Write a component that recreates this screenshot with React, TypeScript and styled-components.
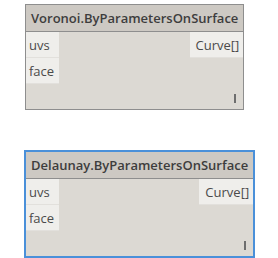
import React from "react";
import styled, { createGlobalStyle } from "styled-components";

const GlobalStyle = createGlobalStyle`
  body {
    margin: 0;
    background: #ffffff;
    font-family: "Open Sans", "Liberation Sans", sans-serif;
  }
`;

type NodeData = {
  title: string;
  inputs: string[];
  outputs: string[];
  selected?: boolean;
};

const nodes: NodeData[] = [
  { title: "Voronoi.ByParametersOnSurface", inputs: ["uvs", "face"], outputs: ["Curve[]"] },
  { title: "Delaunay.ByParametersOnSurface", inputs: ["uvs", "face"], outputs: ["Curve[]"], selected: true },
];

const Canvas = styled.div`
  display: flex;
  flex-direction: column;
  align-items: flex-start;
  gap: 40px;
  padding: 4px 0 0 24px;
`;

const Node = styled.div<{ $selected?: boolean }>`
  display: inline-flex;
  flex-direction: column;
  background: #dcd9d3;
  border: ${(p) => (p.$selected ? "2px solid #4a90d9" : "1px solid #8e8e8e")};
  margin-left: ${(p) => (p.$selected ? "0" : "1px")};
  box-sizing: border-box;
`;

const Header = styled.div`
  height: 27px;
  display: flex;
  align-items: center;
  padding: 0 5px;
  background: #cdc9c3;
  border-bottom: 1px solid #8e8e8e;
  box-sizing: border-box;
  color: #3d3d3d;
  font-size: 13px;
  font-weight: 600;
  white-space: nowrap;
`;

const Body = styled.div`
  display: flex;
  justify-content: space-between;
`;

const PortColumn = styled.div<{ $align: "left" | "right" }>`
  display: flex;
  flex-direction: column;
  align-items: ${(p) => (p.$align === "left" ? "stretch" : "flex-end")};
`;

const Port = styled.div<{ $align: "left" | "right" }>`
  height: 26px;
  display: flex;
  align-items: center;
  box-sizing: border-box;
  padding: ${(p) => (p.$align === "left" ? "0 5px 0 3px" : "0 4px 0 6px")};
  background: #efeeeb;
  border-bottom: 1px solid #e2e0dc;
  color: #4a4a4a;
  font-size: 13px;
`;

const Footer = styled.div`
  height: 25px;
  display: flex;
  justify-content: flex-end;
  align-items: flex-start;
  padding: 10px 7px 0 0;
  box-sizing: border-box;
`;

const LacingMark = styled.div`
  width: 2px;
  height: 9px;
  background: #6e6e6e;
`;

const NodeView = ({ node }: { node: NodeData }) => (
  <Node $selected={node.selected}>
    <Header>{node.title}</Header>
    <Body>
      <PortColumn $align="left">
        {node.inputs.map((name) => (
          <Port key={name} $align="left">
            {name}
          </Port>
        ))}
      </PortColumn>
      <PortColumn $align="right">
        {node.outputs.map((name) => (
          <Port key={name} $align="right">
            {name}
          </Port>
        ))}
      </PortColumn>
    </Body>
    <Footer>
      <LacingMark />
    </Footer>
  </Node>
);

const App = () => (
  <>
    <GlobalStyle />
    <Canvas>
      {nodes.map((n) => (
        <NodeView key={n.title} node={n} />
      ))}
    </Canvas>
  </>
);

export default App;
